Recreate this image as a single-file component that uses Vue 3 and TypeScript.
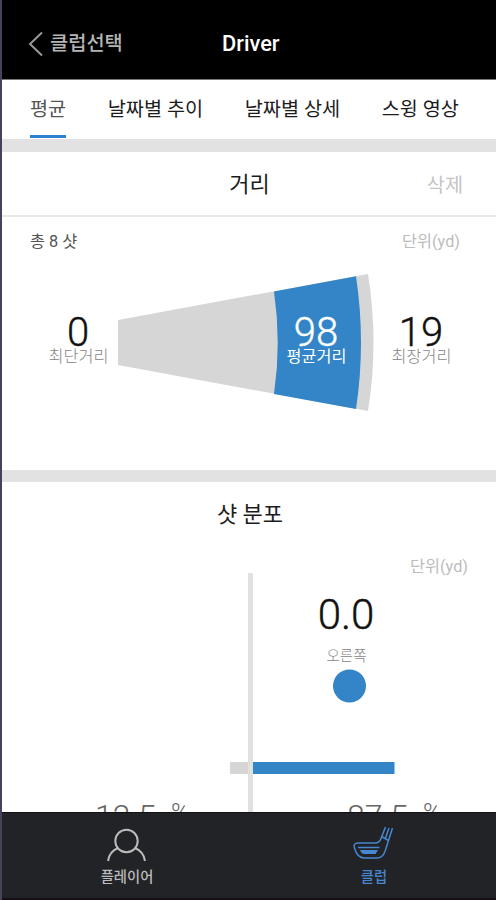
<script setup lang="ts">
import { ref } from 'vue'

interface Share {
  value: string
  x: number
}

const tabs: string[] = ['평균', '날짜별 추이', '날짜별 상세', '스윙 영상']
const activeTab = ref(0)
const shares: Share[] = [
  { value: '12.5', x: 95 },
  { value: '87.5', x: 347 },
]
</script>

<template>
  <main class="screen">
    <header class="header">
      <button class="back">
        <svg width="16" height="26" viewBox="0 0 16 26"><path d="M14 1.5 2 13l12 11.5" /></svg>
        <span>클럽선택</span>
      </button>
      <h1>Driver</h1>
    </header>

    <nav class="tabs">
      <button
        v-for="(tab, i) in tabs"
        :key="tab"
        class="tab"
        :class="{ active: i === activeTab }"
        @click="activeTab = i"
      >{{ tab }}</button>
    </nav>

    <section class="panel distance">
      <div class="title-row">
        <h2>거리</h2>
        <button class="remove">삭제</button>
      </div>
      <div class="meta">
        <span>총 8 샷</span>
        <span class="unit">단위(yd)</span>
      </div>
      <svg class="fan" width="494" height="150" viewBox="2 268 494 150">
        <path class="grey" d="M118 320 368 274Q379 343 368 411L118 365Z" />
        <path class="blue" d="M274 291.500 356 276.300Q366 343 356 409L274 394Q281.500 343 274 291.500Z" />
        <text class="number" x="78" y="346">0</text>
        <text class="caption" x="78.500" y="361.500">최단거리</text>
        <text class="number light" x="316" y="346">98</text>
        <text class="caption light" x="316.500" y="361.500">평균거리</text>
        <text class="number" x="421" y="346">19</text>
        <text class="caption" x="421.500" y="361.500">최장거리</text>
      </svg>
    </section>

    <section class="panel spread">
      <h2>샷 분포</h2>
      <div class="unit">단위(yd)</div>
      <svg class="chart" width="494" height="240" viewBox="2 572 494 240">
        <path class="axis" d="M248 573h5v239h-5z" />
        <path class="grey" d="M230 762h18v12h-18z" />
        <path class="blue" d="M253 762h141.500v12H253z" />
        <text class="number large" x="346" y="628.500">0.0</text>
        <text class="side" x="346.500" y="661">오른쪽</text>
        <circle class="blue" cx="349.500" cy="686" r="16.500" />
        <g v-for="share in shares" :key="share.value" class="share">
          <text :x="share.x" y="826.500">{{ share.value }}</text>
          <text class="percent" :x="share.x + 76" y="821.500">%</text>
        </g>
      </svg>
    </section>

    <footer class="bottom">
      <button class="item">
        <svg width="42" height="36" viewBox="0 0 42 36">
          <circle cx="20.500" cy="14" r="11.200" />
          <path d="M2 34c.8-6 4.200-10.600 10-13M39 34c-.8-6-4.200-10.600-10-13" />
        </svg>
        <span>플레이어</span>
      </button>
      <button class="item selected">
        <svg width="42" height="36" viewBox="0 0 42 36">
          <path d="M32.500 0 28 11.500c-1.300 3.300-2.800 4.500-6 4.500H5c-3.500 0-4.500 2-3.500 5 1.500 5.500 5 10 10 10h12.500c4 0 6.500-2.500 8-6.500L39.500 1" />
          <path d="m28.500 9.500 7 4M36 1l-3.500 10M5 20.500h21.500" />
          <path class="face" d="M7 23h18l-2.500 4H11q-2.500 0-4-4Z" />
        </svg>
        <span>클럽</span>
      </button>
    </footer>
  </main>
</template>

<style>
body { margin: 0; background: #fff; }
</style>

<style scoped>
* { box-sizing: border-box; }
.screen {
  width: 496px;
  height: 900px;
  display: flex;
  flex-direction: column;
  overflow: hidden;
  background: #fff;
  border-left: 2px solid #45425a;
  color: #1c1c1c;
  font-family: Roboto, "Noto Sans CJK KR", sans-serif;
}
button { border: 0; padding: 0; background: none; color: inherit; font: inherit; white-space: nowrap; }
h1, h2 { margin: 0; font-weight: 400; }
svg { display: block; }
.header {
  flex: none;
  height: 80px;
  padding: 9px 0 0 28px;
  margin-left: -2px;
  display: grid;
  grid-template-columns: 194px 1fr;
  align-items: center;
  background: #000;
  border-bottom: 1px solid #777;
}
.back { display: flex; align-items: center; gap: 6px; color: #b4b4b4; font-size: 19.800px; font-weight: 500; line-height: 30px; }
.back svg { fill: none; stroke: #999; stroke-width: 2; }
h1 { color: #fff; font-size: 21.800px; font-weight: 500; line-height: 30px; }
.tabs { flex: none; height: 59px; padding: 12px 0 0 28px; display: flex; align-items: flex-start; gap: 41.500px; }
.tab { height: 46px; padding: 2px 0 9px; font-size: 19.700px; line-height: 32px; border-bottom: 3px solid transparent; }
.tab.active { color: #555; border-color: #2b80cf; }
.panel { flex: none; border-top: 13px solid #e2e2e2; }
.distance { height: 331px; }
.title-row { height: 65px; display: grid; grid-template-columns: 1fr auto 1fr; align-items: center; border-bottom: 2px solid #e8e8e8; padding-right: 33px; padding-left: 34px; }
h2 { font-size: 22px; line-height: 32px; }
.title-row h2 { grid-column: 2; padding-top: 2px; }
.remove { justify-self: end; color: #c4c4c4; font-size: 19.700px; }
.meta { display: flex; justify-content: space-between; height: 51px; padding: 12px 36px 0 28px; font-size: 16.300px; line-height: 26px; color: #555; }
.unit { color: #bcbcbc; font-size: 16.300px; }
.grey { fill: #d6d6d6; }
.blue { fill: #3385c7; }
.number { font-size: 40px; font-weight: 300; fill: #111; stroke: #111; stroke-width: .4px; text-anchor: middle; }
.number.light { stroke: #fff; }
.number.large { font-size: 42px; }
.caption { font-size: 16.300px; fill: #858585; text-anchor: middle; font-weight: 300; }
.light { fill: #fff; }
.caption.light { font-weight: 400; }
.spread { height: 342px; border-top-width: 12px; }
.spread h2 { height: 64px; padding-top: 17px; text-align: center; padding-left: 2px; }
.spread .unit { height: 26px; line-height: 41px; padding-right: 28px; text-align: right; }
.axis { fill: #e1e1e1; }
.side { font-size: 14.500px; fill: #858585; text-anchor: middle; font-weight: 300; }
.share { font-size: 32px; fill: #666; font-weight: 300; }
.percent { font-size: 25px; }
.bottom {
  flex: none;
  height: 88px;
  margin-left: -2px;
  padding-left: 4px;
  display: grid;
  grid-template-columns: 1fr 1fr;
  background: #222327;
  border-top: 1px solid #111;
  border-bottom: 2px solid #160f17;
}
.item { display: flex; flex-direction: column; align-items: center; gap: 2px; padding-top: 14px; color: #bbb; font-size: 14.300px; font-weight: 500; line-height: 24px; }
.item svg { fill: none; stroke: currentColor; stroke-width: 2; }
.item.selected { color: #4687cf; padding-left: 2px; }
.item.selected svg { stroke-width: 1.500; }
.item .face { fill: currentColor; stroke: none; }
</style>
